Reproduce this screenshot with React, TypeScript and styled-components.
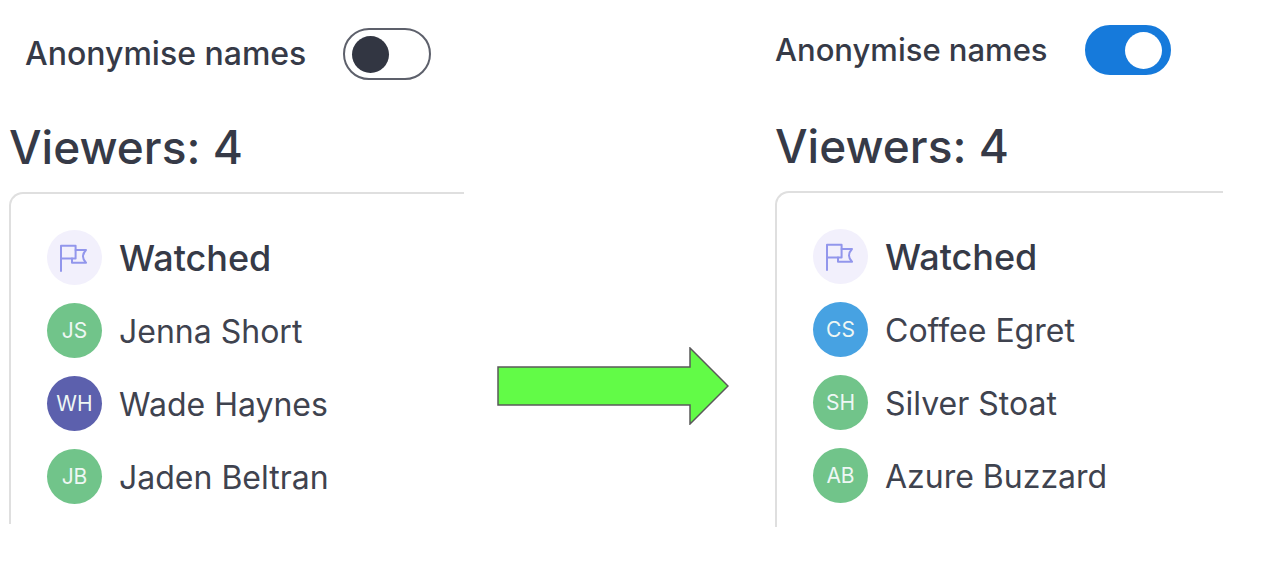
import React, { useId, useState } from "react";
import styled, { createGlobalStyle } from "styled-components";

const GlobalStyle = createGlobalStyle`
  *, *::before { box-sizing: border-box; }
  body {
    margin: 0;
    background: #ffffff;
    color: #363a47;
    font-family: Inter, "Liberation Sans", sans-serif;
  }
`;

const Page = styled.main`
  display: grid;
  grid-template-columns: minmax(0, 455fr) 245px minmax(0, 448fr);
  column-gap: 33px;
  padding: 24px 47px 32px 9px;
`;

const Panel = styled.section<{ $inset?: boolean }>`
  padding-top: ${(p) => (p.$inset ? 4 : 0)}px;
`;

const ToggleRow = styled.div<{ $inset?: boolean }>`
  display: flex;
  align-items: center;
  gap: 37px;
  min-height: 52px;
  padding-left: ${(p) => (p.$inset ? 16 : 0)}px;
  margin-bottom: ${(p) => (p.$inset ? 38 : 41)}px;
  font-size: ${(p) => (p.$inset ? 32 : 31)}px;
`;

const ToggleLabel = styled.label`
  line-height: 40px;
  font-weight: 500;
  white-space: nowrap;
`;

const Switch = styled.input`
  appearance: none;
  flex: none;
  display: flex;
  align-items: center;
  width: 88px;
  height: 52px;
  margin: 0;
  padding: 0 7px;
  border: 2px solid #5d606b;
  border-radius: 26px;
  background: #ffffff;
  cursor: pointer;

  &::before {
    content: "";
    width: 37px;
    height: 37px;
    border-radius: 50%;
    background: #323642;
  }

  &:checked {
    justify-content: flex-end;
    width: 86px;
    height: 50px;
    border-color: #167adb;
    background: #167adb;
  }

  &:checked::before {
    background: #ffffff;
  }
`;

const Heading = styled.h1`
  margin: 0 0 16px;
  font-size: 46px;
  line-height: 58px;
  font-weight: 500;
`;

const Card = styled.div<{ $inset?: boolean }>`
  padding: 36px 0 ${(p) => (p.$inset ? 20 : 24)}px 36px;
  border: solid #dfdfdf;
  border-width: 2px 0 0 2px;
  border-top-left-radius: 14px;
`;

const Row = styled.div`
  display: flex;
  align-items: center;
  gap: 17px;
`;

const GroupTitle = styled.h2`
  margin: 0;
  font-size: 36px;
  line-height: 44px;
  font-weight: 500;
`;

const List = styled.ul`
  display: grid;
  gap: 18px;
  margin: 18px 0 0;
  padding: 0;
  list-style: none;
`;

const Avatar = styled.span<{ $color: string }>`
  display: grid;
  place-items: center;
  flex: none;
  width: 55px;
  height: 55px;
  border-radius: 50%;
  background: ${(p) => p.$color};
  color: #eef7f4;
  font-size: 21px;
  line-height: 26px;
`;

const Name = styled.span`
  padding-top: 2px;
  color: #3f434f;
  font-size: 32px;
  line-height: 40px;
  white-space: nowrap;
`;

const Arrow = styled.svg`
  align-self: start;
  width: 232px;
  height: 78px;
  margin-top: 323px;
`;

type Viewer = { initials: string; name: string; color: string };

const GREEN = "#71c48a";

const realNames: Viewer[] = [
  { initials: "JS", name: "Jenna Short", color: GREEN },
  { initials: "WH", name: "Wade Haynes", color: "#5c60ad" },
  { initials: "JB", name: "Jaden Beltran", color: GREEN },
];

const aliases: Viewer[] = [
  { initials: "CS", name: "Coffee Egret", color: "#47a2e2" },
  { initials: "SH", name: "Silver Stoat", color: GREEN },
  { initials: "AB", name: "Azure Buzzard", color: GREEN },
];

function FlagIcon() {
  return (
    <svg width="55" height="55" viewBox="0 0 55 55" fill="none" stroke="#9296ec" strokeWidth="2" strokeLinejoin="round" strokeLinecap="round" aria-hidden="true">
      <path d="M14 41V15.8H28.6V28.6H14" />
      <path d="M28.6 20H39Q36 23.2 36 26.4Q36 29.6 39 32.8H25V28.6" />
    </svg>
  );
}

type ViewerPanelProps = { anonymised: boolean; inset?: boolean; viewers: Viewer[] };

function ViewerPanel({ anonymised, inset, viewers }: ViewerPanelProps) {
  const id = useId();
  const [on, setOn] = useState(anonymised);
  return (
    <Panel $inset={inset}>
      <ToggleRow $inset={inset}>
        <ToggleLabel htmlFor={id}>Anonymise names</ToggleLabel>
        <Switch id={id} type="checkbox" role="switch" checked={on} onChange={(e) => setOn(e.target.checked)} />
      </ToggleRow>
      <Heading>Viewers: 4</Heading>
      <Card $inset={inset}>
        <Row>
          <Avatar $color="#f2f0fc"><FlagIcon /></Avatar>
          <GroupTitle>Watched</GroupTitle>
        </Row>
        <List>
          {viewers.map((v) => (
            <Row as="li" key={v.name}>
              <Avatar $color={v.color}>{v.initials}</Avatar>
              <Name>{v.name}</Name>
            </Row>
          ))}
        </List>
      </Card>
    </Panel>
  );
}

export default function App() {
  return (
    <>
      <GlobalStyle />
      <Page>
        <ViewerPanel anonymised={false} inset viewers={realNames} />
        <Arrow viewBox="0 0 232 78" aria-hidden="true">
          <path d="M1 20H193V1L231 39L193 77V58H1Z" fill="#62fb47" stroke="#595959" strokeWidth="1.5" />
        </Arrow>
        <ViewerPanel anonymised viewers={aliases} />
      </Page>
    </>
  );
}
